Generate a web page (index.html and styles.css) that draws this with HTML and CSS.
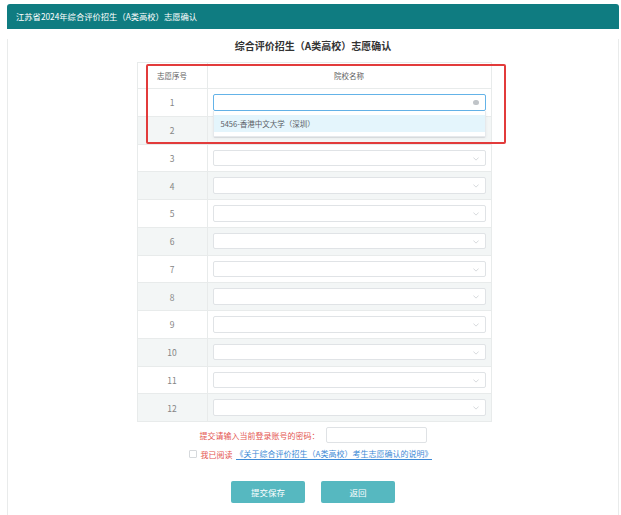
FILE: index.html
```html
<!DOCTYPE html>
<html lang="zh-CN">
<head>
<meta charset="utf-8">
<title>志愿确认</title>
<link rel="stylesheet" href="styles.css">
</head>
<body>
<div class="page">
  <div class="topbar">江苏省2024年综合评价招生（A类高校）志愿确认</div>
  <div class="content">
    <h1 class="title">综合评价招生（A类高校）志愿确认</h1>
    <div class="table-wrap">
      <table class="zy">
        <colgroup><col class="col-num"><col></colgroup>
        <thead>
          <tr><th>志愿序号</th><th>院校名称</th></tr>
        </thead>
        <tbody>
          <tr><td class="num">1</td><td class="cell"><div class="sel focus"><span class="clear"></span></div>
            <div class="dropdown"><div class="opt">5456-香港中文大学（深圳）</div></div></td></tr>
          <tr class="odd"><td class="num">2</td><td class="cell"><div class="sel"><svg class="arrow" viewBox="0 0 8 5"><polyline points="0.5,0.5 4,4 7.5,0.5"/></svg></div></td></tr>
          <tr><td class="num">3</td><td class="cell"><div class="sel"><svg class="arrow" viewBox="0 0 8 5"><polyline points="0.5,0.5 4,4 7.5,0.5"/></svg></div></td></tr>
          <tr class="odd"><td class="num">4</td><td class="cell"><div class="sel"><svg class="arrow" viewBox="0 0 8 5"><polyline points="0.5,0.5 4,4 7.5,0.5"/></svg></div></td></tr>
          <tr><td class="num">5</td><td class="cell"><div class="sel"><svg class="arrow" viewBox="0 0 8 5"><polyline points="0.5,0.5 4,4 7.5,0.5"/></svg></div></td></tr>
          <tr class="odd"><td class="num">6</td><td class="cell"><div class="sel"><svg class="arrow" viewBox="0 0 8 5"><polyline points="0.5,0.5 4,4 7.5,0.5"/></svg></div></td></tr>
          <tr><td class="num">7</td><td class="cell"><div class="sel"><svg class="arrow" viewBox="0 0 8 5"><polyline points="0.5,0.5 4,4 7.5,0.5"/></svg></div></td></tr>
          <tr class="odd"><td class="num">8</td><td class="cell"><div class="sel"><svg class="arrow" viewBox="0 0 8 5"><polyline points="0.5,0.5 4,4 7.5,0.5"/></svg></div></td></tr>
          <tr><td class="num">9</td><td class="cell"><div class="sel"><svg class="arrow" viewBox="0 0 8 5"><polyline points="0.5,0.5 4,4 7.5,0.5"/></svg></div></td></tr>
          <tr class="odd"><td class="num">10</td><td class="cell"><div class="sel"><svg class="arrow" viewBox="0 0 8 5"><polyline points="0.5,0.5 4,4 7.5,0.5"/></svg></div></td></tr>
          <tr><td class="num">11</td><td class="cell"><div class="sel"><svg class="arrow" viewBox="0 0 8 5"><polyline points="0.5,0.5 4,4 7.5,0.5"/></svg></div></td></tr>
          <tr class="odd"><td class="num">12</td><td class="cell"><div class="sel"><svg class="arrow" viewBox="0 0 8 5"><polyline points="0.5,0.5 4,4 7.5,0.5"/></svg></div></td></tr>
        </tbody>
      </table>
      <div class="highlight"></div>
    </div>
    <div class="pwd-line">
      <span class="warn">提交请输入当前登录账号的密码：</span>
      <span class="pwd-input"></span>
    </div>
    <div class="agree-line">
      <span class="checkbox"></span>
      <span class="warn">我已阅读</span>
      <a class="doc-link">《关于综合评价招生（A类高校）考生志愿确认的说明》</a>
    </div>
    <div class="actions">
      <button class="btn">提交保存</button>
      <button class="btn">返回</button>
    </div>
  </div>
</div>
</body>
</html>
```

FILE: styles.css
```css
html, body {
  margin: 0;
  padding: 0;
  background: #ffffff;
  font-family: "Noto Sans CJK SC", "Noto Sans", "Liberation Sans", sans-serif;
}

.page {
  margin: 4px 2px 0 7px;
}

.topbar {
  height: 25px;
  line-height: 25px;
  background: #0f7c81;
  color: #ffffff;
  font-size: 8.3px;
  padding-left: 9px;
  border-radius: 3px 3px 0 0;
}

.content {
  height: 480px;
  box-sizing: border-box;
  border: 1px solid #e9ebeb;
  border-top: 0;
  border-bottom: 0;
}

.title {
  margin: 10px 0 0;
  font-size: 10px;
  line-height: 14px;
  font-weight: bold;
  color: #333333;
  text-align: center;
}

.table-wrap {
  position: relative;
  width: 355px;
  margin: 9px auto 0;
  left: 1px;
}

.zy {
  width: 100%;
  border-collapse: collapse;
  table-layout: fixed;
}

.col-num {
  width: 70px;
}

.zy th,
.zy td {
  border: 1px solid #e8ebeb;
  padding: 0;
}

.zy thead tr {
  height: 26px;
}

.zy th {
  font-size: 7.5px;
  font-weight: normal;
  color: #606060;
  text-align: center;
}

.zy tbody tr {
  height: 27.75px;
}

.zy tbody tr.odd {
  background: #f3f6f6;
}

.num {
  text-align: center;
  font-size: 8.5px;
  color: #858585;
}

.cell {
  position: relative;
  padding: 0 5px !important;
}

.sel {
  position: relative;
  height: 16.5px;
  box-sizing: border-box;
  border: 1px solid #e0e3e6;
  border-radius: 2px;
  background: #ffffff;
}

.sel.focus {
  border-color: #64b3e8;
}

.arrow {
  position: absolute;
  right: 6px;
  top: 6px;
  width: 6px;
  height: 4px;
  fill: none;
  stroke: #c4c8cc;
  stroke-width: 0.9;
}

.clear {
  position: absolute;
  right: 6px;
  top: 4.5px;
  width: 5.5px;
  height: 5.5px;
  border-radius: 50%;
  background: #c0c4c8;
}

.dropdown {
  position: absolute;
  left: 5px;
  right: 5px;
  top: 22px;
  padding: 4px 0 4px;
  background: #ffffff;
  border: 1px solid #e6e9ec;
  border-top: 0;
  box-shadow: 0 1px 3px rgba(0, 0, 0, 0.06);
  z-index: 2;
}

.opt {
  height: 17px;
  line-height: 17px;
  padding-left: 7px;
  background: #e4f5fc;
  font-size: 7.5px;
  color: #5a5e66;
}

.highlight {
  position: absolute;
  left: 9px;
  top: 2px;
  width: 360px;
  height: 80px;
  box-sizing: border-box;
  border: 2px solid #e23b3b;
  border-radius: 2px;
  z-index: 3;
}

.pwd-line {
  margin-top: 5px;
  display: flex;
  justify-content: center;
  align-items: center;
  gap: 6px;
}

.warn {
  font-size: 8px;
  color: #e4554f;
}

.pwd-input {
  width: 101px;
  height: 16px;
  box-sizing: border-box;
  border: 1px solid #dfe2e5;
  border-radius: 2px;
}

.agree-line {
  margin-top: 5px;
  height: 12px;
  display: flex;
  justify-content: center;
  align-items: center;
  padding-right: 5px;
}

.checkbox {
  width: 8px;
  height: 8px;
  box-sizing: border-box;
  border: 1px solid #d6d9dc;
  border-radius: 1px;
  margin-right: 4px;
}

.doc-link {
  margin-left: 3px;
  font-size: 8px;
  color: #3d8ad6;
  line-height: 10px;
  border-bottom: 1px solid #3d8ad6;
}

.actions {
  margin-top: 21px;
  display: flex;
  justify-content: center;
  gap: 16px;
}

.btn {
  width: 74px;
  height: 22px;
  border: 0;
  border-radius: 2px;
  background: #56b8c0;
  color: #ffffff;
  font-family: inherit;
  font-size: 8.5px;
  padding: 0;
}
```
